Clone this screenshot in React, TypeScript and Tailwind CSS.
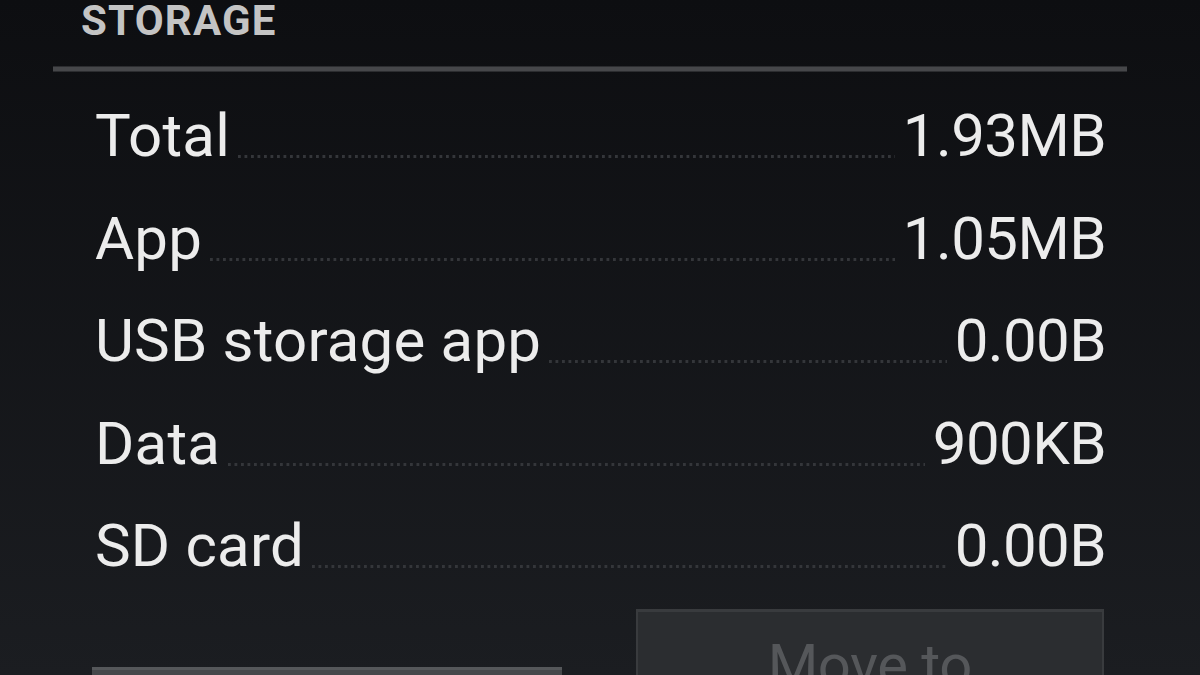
import React from "react";

const rows = [
  { label: "Total", value: "1.93MB" },
  { label: "App", value: "1.05MB" },
  { label: "USB storage app", value: "0.00B" },
  { label: "Data", value: "900KB" },
  { label: "SD card", value: "0.00B" },
];

export default function App() {
  return (
    <div
      className="w-[1200px] h-[675px] overflow-hidden bg-[linear-gradient(to_bottom,#0d0e11,#1b1d21)] text-[#ececec]"
      style={{ fontFamily: "Roboto, 'Noto Sans', sans-serif" }}
    >
      <div className="pl-[81px] h-[42px] text-[42px] leading-[42px] font-bold text-[#c4c4c4] tracking-[1.2px]">
        STORAGE
      </div>
      <div className="mt-[24px] ml-[53px] mr-[73px] h-[6px] bg-[#46474a] border-y border-[#2c2d30]" />
      <div className="mt-[13px] pl-[95px] pr-[94px] flex flex-col">
        {rows.map((r) => (
          <div key={r.label} className="flex items-baseline h-[102.5px] text-[60px] leading-[102.5px]">
            <span className="tracking-[0.2px]">{r.label}</span>
            <div className="flex-1 mx-[8px] h-[3px] translate-y-[2px] bg-[linear-gradient(to_right,#34363a_50%,transparent_50%)] bg-[length:6.5px_3px] bg-repeat-x" />
            <span className="tracking-[-0.6px]">{r.value}</span>
          </div>
        ))}
      </div>
      <div className="mt-[11px] flex gap-[74px] pl-[92px] pr-[96px]">
        <div className="mt-[58px] w-[470px] h-[120px] bg-[#46484b] border-t-[3px] border-[#55575a]" />
        <div className="w-[469px] h-[120px] bg-[#2b2d30] border-t-[3px] border-x-2 border-[#393b3e] flex justify-center">
          <span className="mt-[24px] text-[58px] leading-[58px] text-[#55575a] tracking-[-0.5px]">Move to</span>
        </div>
      </div>
    </div>
  );
}
